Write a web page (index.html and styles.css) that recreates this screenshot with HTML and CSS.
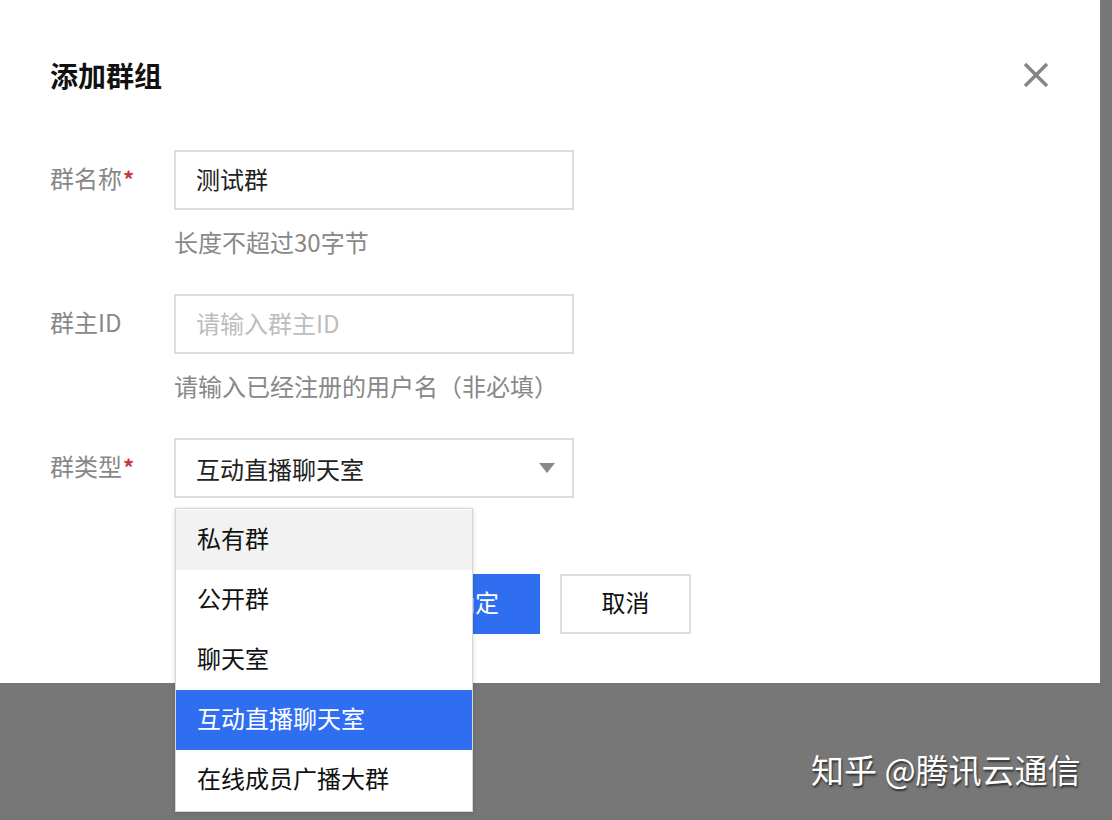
FILE: index.html
```html
<!DOCTYPE html>
<html lang="zh-CN">
<head>
<meta charset="utf-8">
<title>添加群组</title>
<link rel="stylesheet" href="styles.css">
</head>
<body>
<div class="page">
  <div class="dialog">
    <div class="header">
      <h1 class="title">添加群组</h1>
      <button class="close" aria-label="关闭">
        <svg width="26" height="26" viewBox="0 0 26 26"><path d="M2 2 L24 24 M24 2 L2 24" stroke="#858585" stroke-width="3.4" fill="none"/></svg>
      </button>
    </div>
    <div class="form">
      <div class="row">
        <div class="label">群名称<span class="req">*</span></div>
        <div class="field">
          <div class="input">测试群</div>
          <div class="help">长度不超过30字节</div>
        </div>
      </div>
      <div class="row">
        <div class="label">群主ID</div>
        <div class="field">
          <div class="input placeholder">请输入群主ID</div>
          <div class="help">请输入已经注册的用户名（非必填）</div>
        </div>
      </div>
      <div class="row">
        <div class="label">群类型<span class="req">*</span></div>
        <div class="field select-wrap">
          <div class="input select">互动直播聊天室<span class="caret"></span></div>
          <ul class="menu">
            <li class="item hover">私有群</li>
            <li class="item">公开群</li>
            <li class="item">聊天室</li>
            <li class="item active">互动直播聊天室</li>
            <li class="item">在线成员广播大群</li>
          </ul>
        </div>
      </div>
      <div class="actions">
        <button class="btn primary">确定</button>
        <button class="btn">取消</button>
      </div>
    </div>
  </div>
  <div class="watermark">知乎 @腾讯云通信</div>
</div>
</body>
</html>
```

FILE: styles.css
```css
* { box-sizing: border-box; }
html, body {
  margin: 0;
  padding: 0;
}
body {
  width: 1112px;
  height: 820px;
  overflow: hidden;
  background: #777777;
  font-family: "Noto Sans CJK SC", "Noto Sans", sans-serif;
}
.page {
  position: relative;
  width: 1112px;
  height: 820px;
}
.dialog {
  width: 1100px;
  height: 683px;
  background: #ffffff;
  padding: 50px 50px 0 50px;
}
.header {
  display: flex;
  align-items: center;
  justify-content: space-between;
  height: 50px;
}
.title {
  margin: 0;
  font-size: 28px;
  font-weight: 700;
  color: #111;
  line-height: 48px;
}
.close {
  border: 0;
  background: none;
  padding: 0;
  margin-right: 1px;
  width: 26px;
  height: 26px;
  display: flex;
}
.form {
  margin-top: 50px;
}
.row {
  display: flex;
  margin-bottom: 34px;
}
.label {
  width: 124px;
  height: 60px;
  line-height: 56px;
  font-size: 24px;
  color: #888;
}
.req {
  color: #c8393b;
  font-size: 22px;
  font-weight: 700;
  margin-left: 1px;
}
.field {
  width: 400px;
}
.select-wrap {
  position: relative;
}
.input {
  height: 60px;
  border: 2px solid #dedede;
  padding: 0 20px;
  line-height: 53px;
  font-size: 24px;
  color: #222;
}
.placeholder {
  color: #bdbdbd;
}
.select {
  display: flex;
  justify-content: space-between;
  align-items: center;
}
.caret {
  width: 0;
  height: 0;
  border-left: 8px solid transparent;
  border-right: 8px solid transparent;
  border-top: 10px solid #888;
  margin-right: -3px;
}
.help {
  margin-top: 16px;
  height: 34px;
  line-height: 32px;
  font-size: 24px;
  color: #888;
}
.menu {
  position: absolute;
  left: 1px;
  top: 70px;
  width: 298px;
  margin: 0;
  padding: 1px 0;
  list-style: none;
  background: #fff;
  border: 1px solid #d6d6d6;
  box-shadow: 0 1px 4px rgba(0,0,0,0.18);
  z-index: 2;
}
.item {
  height: 60px;
  line-height: 56px;
  padding: 0 21px;
  font-size: 24px;
  color: #111;
}
.item.hover {
  background: #f2f2f2;
}
.item.active {
  background: #2f6ef1;
  color: #fff;
}
.actions {
  display: flex;
  gap: 20px;
  margin-left: 360px;
  margin-top: 76px;
}
.btn {
  width: 131px;
  height: 60px;
  border: 2px solid #dedede;
  background: #fff;
  font-family: inherit;
  font-size: 24px;
  line-height: 50px;
  color: #111;
  padding: 0 0 4px 0;
}
.btn.primary {
  width: 130px;
  background: #2f6ef1;
  border-color: #2f6ef1;
  color: #fff;
}
.watermark {
  position: absolute;
  left: 811px;
  top: 746px;
  font-size: 33px;
  line-height: 46px;
  color: #fff;
  text-shadow: 1px 2px 2px rgba(0,0,0,0.6);
  white-space: nowrap;
}
```
